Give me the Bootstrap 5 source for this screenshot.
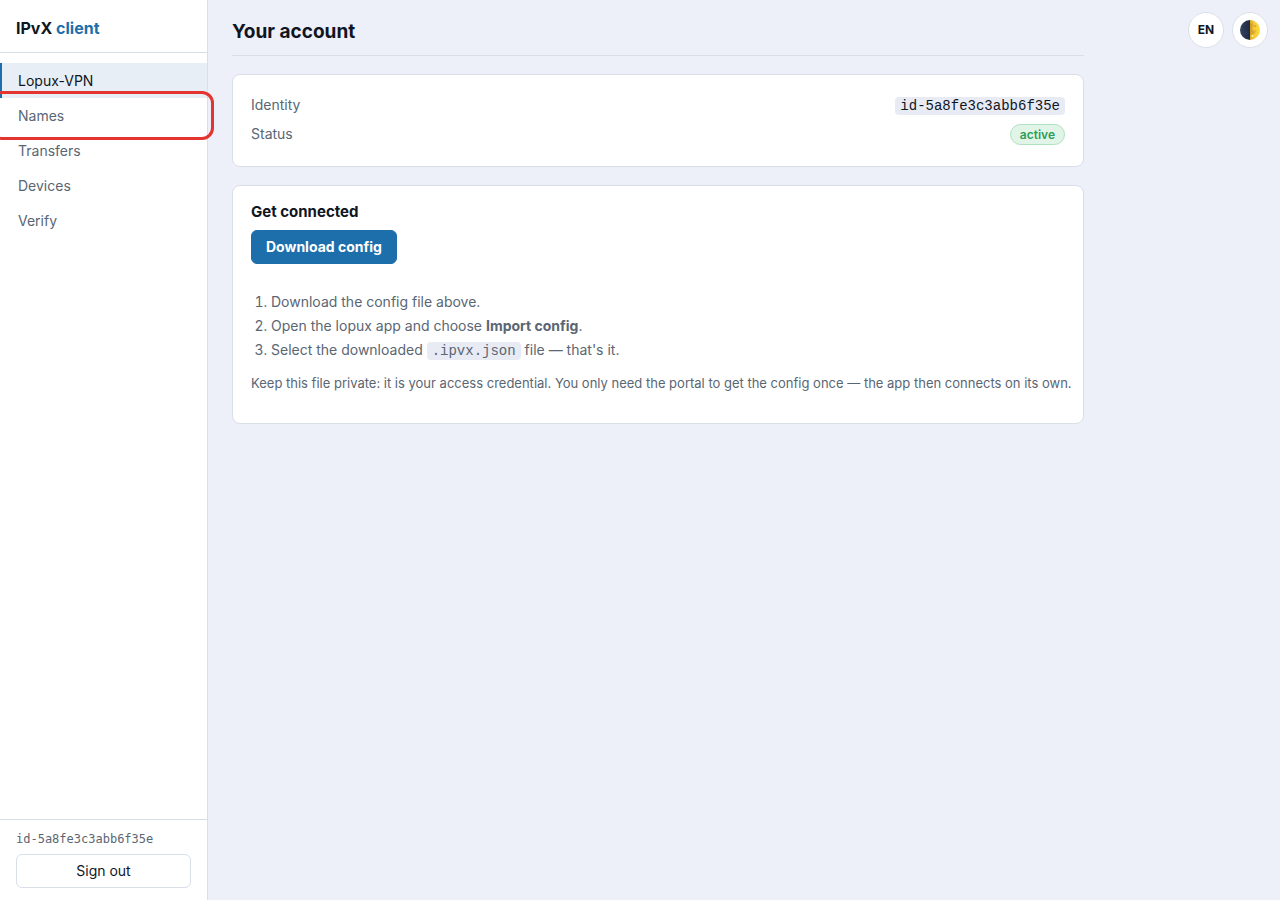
<!DOCTYPE html>
<html lang="en">
<head>
<meta charset="utf-8">
<meta name="viewport" content="width=device-width, initial-scale=1">
<title>IPvX client</title>
<link href="https://cdn.jsdelivr.net/npm/bootstrap@5.3.0/dist/css/bootstrap.min.css" rel="stylesheet">
<style>
:root { --line: #d8dfe9; --muted: #5a6673; --ink: #10161f; --accent: #1d6fab; }
body { background: #edf0f9; color: var(--ink); font-family: Inter, "Liberation Sans", sans-serif; font-size: 14px; line-height: 24px; }
.sidebar { width: 208px; border-right: 1px solid var(--line); }
.brand { color: var(--ink); font-size: 16px; font-weight: 700; line-height: 24px; padding: 16px 16px 12px; border-bottom: 1px solid var(--line); }
.brand span { color: var(--accent); }
.side-nav { padding-top: 10px; }
.side-nav .nav-link { color: var(--muted); line-height: 21px; padding: 7px 16px; border-left: 2px solid transparent; }
.side-nav .nav-link.active { color: var(--ink); background: #e8eef6; border-left-color: var(--accent); }
.highlight { position: absolute; inset: -7px -7px -7px -10px; border: 3px solid #e3342f; border-radius: 12px; pointer-events: none; z-index: 2; }
.side-foot { border-top: 1px solid var(--line); padding: 9px 16px 12px; }
.side-id { color: var(--muted); font-family: "DejaVu Sans Mono", monospace; font-size: 12px; line-height: 20px; margin-bottom: 5px; }
.btn { font-size: 14px; line-height: 20px; padding: 6px 14px; border-radius: 6px; }
.btn-out { border: 1px solid var(--line); background: #fff; color: var(--ink); }
.btn-main { background: var(--accent); border-color: var(--accent); color: #fff; font-weight: 700; }
.content { max-width: 900px; padding: 16px 24px; }
.page-title { font-size: 19px; font-weight: 700; line-height: 32px; padding-bottom: 7px; margin-bottom: 18px; border-bottom: 1px solid var(--line); }
.panel { border: 1px solid var(--line); border-radius: 8px; padding: 16px 18px; margin-bottom: 18px; }
.facts { margin-bottom: 2px; }
.facts dt, .facts dd { font-weight: 400; line-height: 28px; margin: 0; }
.facts dt { color: var(--muted); }
.panel code { background: #e8ebf4; color: inherit; font-family: "Liberation Mono", monospace; font-size: 14px; padding: 1px 5px; border-radius: 4px; }
.pill { background: #e1f4e8; border: 1px solid #afe0c0; color: #2d9d57; font-size: 12px; font-weight: 600; line-height: 19px; padding: 0 9px; }
.panel h2 { font-size: 15px; font-weight: 700; line-height: 20px; margin-bottom: 8px; }
.steps { color: var(--muted); margin: 26px 0 10px; padding-left: 20px; }
.steps strong { font-weight: 700; }
.note { color: var(--muted); font-size: 13px; line-height: 20px; margin-bottom: 14px; }
@media (min-width: 1140px) { .note { white-space: nowrap; } }
.tools { position: fixed; top: 12px; right: 12px; }
.round { width: 36px; height: 36px; padding: 0; border: 1px solid var(--line); border-radius: 50%; background: #fff; color: var(--ink); font-size: 12px; font-weight: 700; }
</style>
</head>
<body>
<div class="d-flex min-vh-100">
  <aside class="sidebar d-flex flex-column flex-shrink-0 bg-white">
    <div class="brand">IPvX <span>client</span></div>
    <nav class="side-nav nav flex-column flex-nowrap flex-grow-1" aria-label="Main">
      <a class="nav-link active" href="#vpn" aria-current="page">Lopux-VPN</a>
      <div class="position-relative">
        <a class="nav-link" href="#names">Names</a>
        <div class="highlight"></div>
      </div>
      <a class="nav-link" href="#transfers">Transfers</a>
      <a class="nav-link" href="#devices">Devices</a>
      <a class="nav-link" href="#verify">Verify</a>
    </nav>
    <div class="side-foot">
      <div class="side-id">id-5a8fe3c3abb6f35e</div>
      <button type="button" class="btn btn-out w-100">Sign out</button>
    </div>
  </aside>
  <main class="content flex-grow-1">
    <h1 class="page-title">Your account</h1>
    <section class="panel bg-white">
      <dl class="facts">
        <div class="d-flex justify-content-between"><dt>Identity</dt><dd><code>id-5a8fe3c3abb6f35e</code></dd></div>
        <div class="d-flex justify-content-between"><dt>Status</dt><dd class="d-flex align-items-center"><span class="pill rounded-pill">active</span></dd></div>
      </dl>
    </section>
    <section class="panel bg-white">
      <h2>Get connected</h2>
      <button type="button" class="btn btn-main">Download config</button>
      <ol class="steps">
        <li>Download the config file above.</li>
        <li>Open the lopux app and choose <strong>Import config</strong>.</li>
        <li>Select the downloaded <code>.ipvx.json</code> file — that's it.</li>
      </ol>
      <p class="note">Keep this file private: it is your access credential. You only need the portal to get the config once — the app then connects on its own.</p>
    </section>
  </main>
</div>
<div class="tools d-flex gap-2">
  <button type="button" class="btn round">EN</button>
  <button type="button" class="btn round d-flex align-items-center justify-content-center" aria-label="Toggle theme">
    <svg width="20" height="20" viewBox="0 0 20 20" aria-hidden="true">
      <defs>
        <linearGradient id="lit" x1="0" x2="1"><stop offset="0" stop-color="#d9a92c"/><stop offset=".45" stop-color="#f5cb3c"/><stop offset="1" stop-color="#ffdc2e"/></linearGradient>
        <linearGradient id="dark" x1="0" x2="1"><stop offset="0" stop-color="#35435f"/><stop offset="1" stop-color="#1d2842"/></linearGradient>
      </defs>
      <path d="M10 0a10 10 0 0 0 0 20z" fill="url(#dark)"/>
      <path d="M10 0a10 10 0 0 1 0 20z" fill="url(#lit)"/>
      <path d="M10 3q3 0 3 2t-1 3 2 3-1 3-3 1z" fill="#c99422" opacity=".55"/>
      <circle cx="15" cy="6" r="1.3" fill="#dfb02f"/><circle cx="15.500" cy="11" r="1" fill="#e3b52e"/><circle cx="12.500" cy="16" r="1" fill="#fff2a0"/>
      <circle cx="5" cy="7" r="1.500" fill="#263453"/><circle cx="6" cy="13" r="1.800" fill="#2b3857"/>
    </svg>
  </button>
</div>
<script src="https://cdn.jsdelivr.net/npm/bootstrap@5.3.0/dist/js/bootstrap.bundle.min.js"></script>
</body>
</html>
